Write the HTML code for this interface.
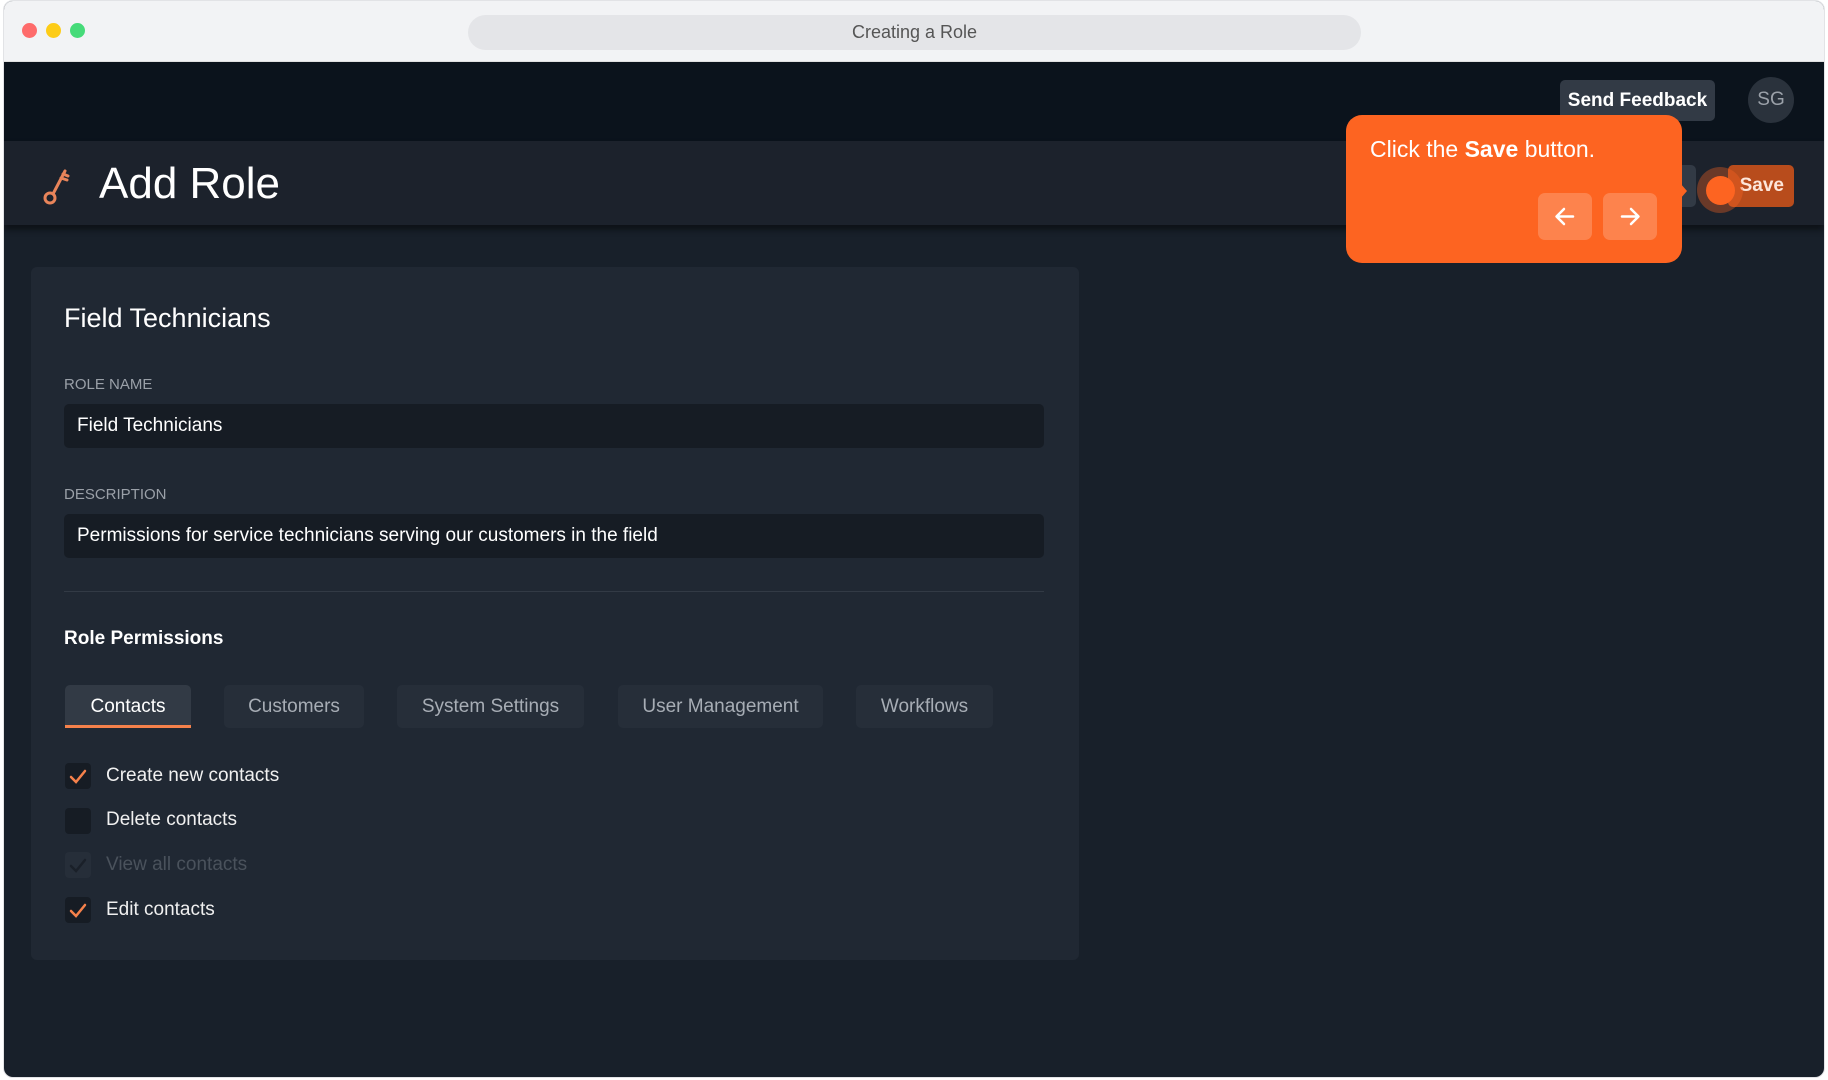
<!DOCTYPE html>
<html><head><meta charset="utf-8"><style>
*{box-sizing:border-box;margin:0;padding:0}
body{width:1828px;height:1080px;background:#fff;font-family:"Liberation Sans",sans-serif;position:relative;overflow:hidden}
.abs{position:absolute}
.win{left:3px;top:0;width:1822px;height:1078px;border:1px solid #e2e3e6;border-radius:10px;overflow:hidden;background:#18202a}
.tb{left:0;top:0;width:100%;height:61px;background:#f2f3f5;border-bottom:1px solid #e0e0e0}
.dot{width:15px;height:15px;border-radius:50%;top:22px}
.url{left:464px;top:14px;width:893px;height:35px;border-radius:18px;background:#e4e5e8;color:#555;font-size:18px;text-align:center;line-height:35px}
.nav{left:0;top:61px;width:100%;height:79px;background:#0b131c}
.hdr{left:0;top:140px;width:100%;height:84px;background:#1c222c;box-shadow:0 5px 6px rgba(0,0,0,.45)}
.card{left:27px;top:266px;width:1048px;height:693px;background:#202833;border-radius:6px}
.lbl{color:#9aa0a8;font-size:15px}
.inp{width:980px;height:44px;background:#161c24;border-radius:5px;color:#fff;font-size:19px;line-height:44px;padding-left:13px}
.tab{top:684px;height:43px;background:#262e39;border-radius:5px;color:#a7adb5;font-size:19px;line-height:43px;text-align:center}
.cb{width:26px;height:26px;border-radius:4px;background:#161c24;left:61px}
.ct{left:102px;color:#f0f0f0;font-size:19px}
</style></head><body>
<div class="abs win">
<div class="abs tb">
<div class="abs dot" style="left:18px;background:#fe6b6b"></div>
<div class="abs dot" style="left:42px;background:#fdcc17"></div>
<div class="abs dot" style="left:66px;background:#46db79"></div>
<div class="abs url">Creating a Role</div>
</div>
<div class="abs nav">
<div class="abs" style="left:1556px;top:18px;width:155px;height:41px;background:#323a45;border-radius:5px;color:#fff;font-weight:bold;font-size:19px;line-height:41px;text-align:center">Send Feedback</div>
<div class="abs" style="left:1744px;top:15px;width:46px;height:46px;border-radius:50%;background:#2a323c;color:#9ba1a9;font-size:19px;line-height:46px;text-align:center">SG</div>
</div>
<div class="abs hdr">
<svg class="abs" style="left:37px;top:25px" width="32" height="40" viewBox="0 0 32 40" fill="none" stroke="#e8845a" stroke-width="3" stroke-linecap="round"><circle cx="9" cy="32" r="5"/><path d="M12 28 L24 5 M20 12 L26 14 M22 8 L27 10"/></svg>
<div class="abs" style="left:95px;top:18px;color:#fff;font-size:44px">Add Role</div>
<div class="abs" style="left:1660px;top:24px;width:32px;height:42px;background:#323a45;border-radius:5px"></div>
<div class="abs" style="left:1724px;top:24px;width:66px;height:42px;background:#b84c1c;border-radius:5px;color:#fde6da;font-weight:bold;font-size:19px;line-height:42px;text-align:right;padding-right:10px">Save</div>
<div class="abs" style="left:1693px;top:26px;width:46px;height:46px;border-radius:50%;background:rgba(253,100,33,.35)"></div>
<div class="abs" style="left:1702px;top:35px;width:29px;height:29px;border-radius:50%;background:#fd6421"></div>
</div>
<div class="abs" style="left:1342px;top:114px;width:336px;height:148px;background:#fd6421;border-radius:16px">
<div class="abs" style="left:334px;top:68px;width:0;height:0;border-top:8px solid transparent;border-bottom:8px solid transparent;border-left:7px solid #fd6421"></div>
<div class="abs" style="left:24px;top:21px;color:#fff;font-size:23px">Click the <b>Save</b> button.</div>
<div class="abs" style="left:192px;top:78px;width:54px;height:47px;border-radius:7px;background:rgba(255,255,255,.2)"><svg width="54" height="47" viewBox="0 0 54 47" fill="none" stroke="#fff" stroke-width="2.5" stroke-linecap="round" stroke-linejoin="round"><path d="M35 23.5H19M26 16l-7.5 7.5L26 31"/></svg></div>
<div class="abs" style="left:257px;top:78px;width:54px;height:47px;border-radius:7px;background:rgba(255,255,255,.2)"><svg width="54" height="47" viewBox="0 0 54 47" fill="none" stroke="#fff" stroke-width="2.5" stroke-linecap="round" stroke-linejoin="round"><path d="M19 23.5H35M28 16l7.5 7.5L28 31"/></svg></div>
</div>
<div class="abs card"></div>
<div class="abs" style="left:60px;top:302px;color:#fff;font-size:27px">Field Technicians</div>
<div class="abs lbl" style="left:60px;top:375px">ROLE NAME</div>
<div class="abs inp" style="left:60px;top:403px">Field Technicians</div>
<div class="abs lbl" style="left:60px;top:485px">DESCRIPTION</div>
<div class="abs inp" style="left:60px;top:513px">Permissions for service technicians serving our customers in the field</div>
<div class="abs" style="left:60px;top:590px;width:980px;height:1px;background:#323a45"></div>
<div class="abs" style="left:60px;top:627px;color:#fff;font-weight:bold;font-size:19px">Role Permissions</div>
<div class="abs tab" style="left:61px;width:126px;background:#323a45;color:#fff;border-bottom:3px solid #f5814b;border-radius:5px 5px 0 0">Contacts</div>
<div class="abs tab" style="left:220px;width:140px">Customers</div>
<div class="abs tab" style="left:393px;width:187px">System Settings</div>
<div class="abs tab" style="left:614px;width:205px">User Management</div>
<div class="abs tab" style="left:852px;width:137px">Workflows</div>
<div class="abs cb" style="top:762px"><svg width="26" height="26" viewBox="0 0 26 26" fill="none" stroke="#f5814b" stroke-width="2.5" stroke-linecap="round"><path d="M6 14l5 5 9-11"/></svg></div>
<div class="abs ct" style="top:764px">Create new contacts</div>
<div class="abs cb" style="top:807px"></div>
<div class="abs ct" style="top:808px">Delete contacts</div>
<div class="abs cb" style="top:851px;background:#262e39"><svg width="26" height="26" viewBox="0 0 26 26" fill="none" stroke="#1a2029" stroke-width="2.5" stroke-linecap="round"><path d="M6 14l5 5 9-11"/></svg></div>
<div class="abs ct" style="top:853px;color:#4a525c">View all contacts</div>
<div class="abs cb" style="top:896px"><svg width="26" height="26" viewBox="0 0 26 26" fill="none" stroke="#f5814b" stroke-width="2.5" stroke-linecap="round"><path d="M6 14l5 5 9-11"/></svg></div>
<div class="abs ct" style="top:898px">Edit contacts</div>
</div>
</body></html>
